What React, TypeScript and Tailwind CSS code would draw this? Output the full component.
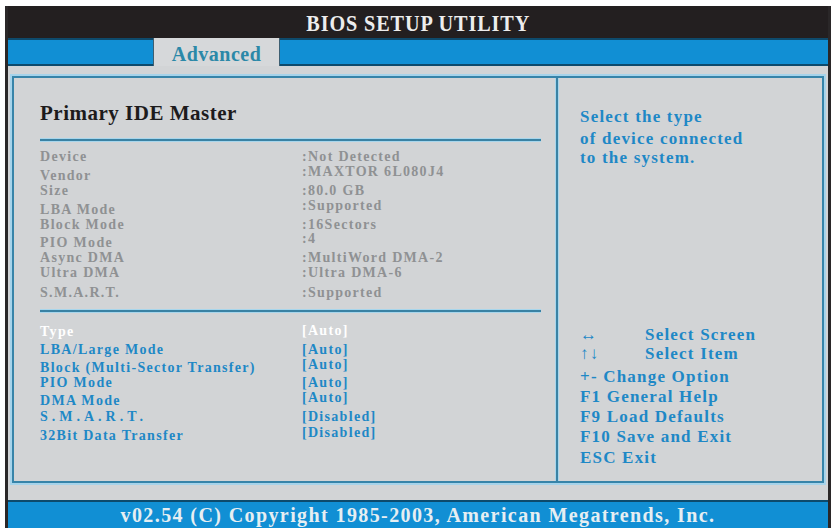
import React from 'react';

type Item = { text: string; cls: string };

const grayLabels: Item[] = [
  { text: 'Device', cls: '' },
  { text: 'Vendor', cls: 'mt-[3px]' },
  { text: 'Size', cls: '-mt-[1px]' },
  { text: 'LBA Mode', cls: 'mt-[3px]' },
  { text: 'Block Mode', cls: '-mt-[1px]' },
  { text: 'PIO Mode', cls: 'mt-[2px]' },
  { text: 'Async DMA', cls: '-mt-[1px]' },
  { text: 'Ultra DMA', cls: '-mt-[1px]' },
  { text: 'S.M.A.R.T.', cls: 'mt-[4px]' },
];

const grayValues: Item[] = [
  { text: ':Not Detected', cls: '' },
  { text: ':MAXTOR 6L080J4', cls: '-mt-[1px]' },
  { text: ':80.0 GB', cls: 'mt-[3px]' },
  { text: ':Supported', cls: '-mt-[1px]' },
  { text: ':16Sectors', cls: 'mt-[3px]' },
  { text: ':4', cls: '-mt-[2px]' },
  { text: ':MultiWord DMA-2', cls: 'mt-[3px]' },
  { text: ':Ultra DMA-6', cls: '-mt-[1px]' },
  { text: ':Supported', cls: 'mt-[4px]' },
];

const optLabels: Item[] = [
  { text: 'Type', cls: 'text-white' },
  { text: 'LBA/Large Mode', cls: 'mt-[2px]' },
  { text: 'Block (Multi-Sector Transfer)', cls: 'mt-[2px]' },
  { text: 'PIO Mode', cls: '-mt-[1px]' },
  { text: 'DMA Mode', cls: 'mt-[2px]' },
  { text: 'S.M.A.R.T.', cls: 'tracking-[4px]' },
  { text: '32Bit Data Transfer', cls: 'mt-[3px]' },
];

const optValues: Item[] = [
  { text: '[Auto]', cls: 'text-white' },
  { text: '[Auto]', cls: 'mt-[3px]' },
  { text: '[Auto]', cls: '-mt-[1px]' },
  { text: '[Auto]', cls: 'mt-[2px]' },
  { text: '[Auto]', cls: '-mt-[1px]' },
  { text: '[Disabled]', cls: 'mt-[3px]' },
  { text: '[Disabled]', cls: '' },
];

const helpKeys: { key: string; text: string; cls: string }[] = [
  { key: '\u2194', text: 'Select Screen', cls: '' },
  { key: '\u2191\u2193', text: 'Select Item', cls: '-mt-[1px]' },
  { key: '', text: '+- Change Option', cls: 'mt-[3px]' },
  { key: '', text: 'F1 General Help', cls: '' },
  { key: '', text: 'F9 Load Defaults', cls: '' },
  { key: '', text: 'F10 Save and Exit', cls: '' },
  { key: '', text: 'ESC Exit', cls: 'mt-[1px]' },
];

const Divider = () => (
  <div className="h-[4px] bg-[#3a82a4] border-y border-[#a8d6ec]" />
);

const App = () => {
  return (
    <div className="w-[834px] h-[529px] bg-white pt-[6px] pl-[5px] font-['Liberation_Serif',serif] font-bold overflow-hidden">
      <div className="w-[826px] h-[522px] flex flex-col border-x-[3px] border-[#2a2728]">
        {/* title */}
        <div className="h-[32px] bg-[#231f20] flex items-center justify-center">
          <span className="text-[23px] leading-none tracking-[1px] text-[#ededed] scale-x-[0.88] mt-[2px]">
            BIOS SETUP UTILITY
          </span>
        </div>

        {/* tab bar */}
        <div className="h-[28px] flex">
          <div className="w-[145px] bg-[#118fd4] border-t-2 border-b-2 border-[#0d4a6c]" />
          <div className="w-[127px] bg-[#d6d8da] border-x border-[#3d5f72] flex items-center justify-center">
            <span className="text-[20px] leading-none tracking-[0.5px] text-[#2b88a8] mt-[3px]">Advanced</span>
          </div>
          <div className="flex-1 bg-[#118fd4] border-t-2 border-b-2 border-[#0d4a6c]" />
        </div>

        {/* main */}
        <div className="h-[434px] bg-[#d2d4d6] px-[2px] pt-[8px] pb-[15px] flex flex-col">
          <div className="flex-1 border-2 border-[#a6d3ea]">
            <div className="h-full border-2 border-[#3784a9] flex">
              {/* left */}
              <div className="w-[541px] pl-[26px] pr-[14px] pt-[25px] flex flex-col">
                <div className="text-[21px] leading-[20px] tracking-[0.5px] text-[#1d1b1c]">Primary IDE Master</div>
                <div className="mt-[15px]">
                  <Divider />
                </div>
                <div className="mt-[7px] flex text-[14px] leading-[16px] tracking-[1.3px] text-[#8f9193]">
                  <div className="w-[262px] flex flex-col">
                    {grayLabels.map((it, i) => (
                      <div key={i} className={it.cls}>{it.text}</div>
                    ))}
                  </div>
                  <div className="flex flex-col">
                    {grayValues.map((it, i) => (
                      <div key={i} className={it.cls}>{it.text}</div>
                    ))}
                  </div>
                </div>
                <div className="mt-[8px]">
                  <Divider />
                </div>
                <div className="mt-[10px] flex text-[14px] leading-[16px] tracking-[1.3px] text-[#1e88c6]">
                  <div className="w-[262px] pt-[1px] flex flex-col">
                    {optLabels.map((it, i) => (
                      <div key={i} className={it.cls}>{it.text}</div>
                    ))}
                  </div>
                  <div className="flex flex-col">
                    {optValues.map((it, i) => (
                      <div key={i} className={it.cls}>{it.text}</div>
                    ))}
                  </div>
                </div>
              </div>

              {/* vertical divider */}
              <div className="w-[4px] bg-[#3a82a4] border-x border-[#a8d6ec]" />

              {/* right */}
              <div className="flex-1 pl-[21px] pt-[29px] flex flex-col text-[17px] leading-[20px] tracking-[1.2px] text-[#1e88c6]">
                <div>Select the type</div>
                <div className="mt-[2px]">of device connected</div>
                <div className="-mt-[1px]">to the system.</div>
                <div className="mt-[157px] flex flex-col">
                  {helpKeys.map((h, i) => (
                    <div key={i} className={`flex items-center ${h.cls}`}>
                      {h.key ? <span className="w-[65px] leading-[20px]">{h.key}</span> : null}
                      <span>{h.text}</span>
                    </div>
                  ))}
                </div>
              </div>
            </div>
          </div>
        </div>

        {/* footer */}
        <div className="h-[28px] bg-[#118fd4] border-t-2 border-[#0d4a6c] flex items-center justify-center">
          <span className="text-[20px] leading-none tracking-[1.4px] text-[#e6eef2]">
            v02.54 (C) Copyright 1985-2003, American Megatrends, Inc.
          </span>
        </div>
      </div>
    </div>
  );
};

export default App;
